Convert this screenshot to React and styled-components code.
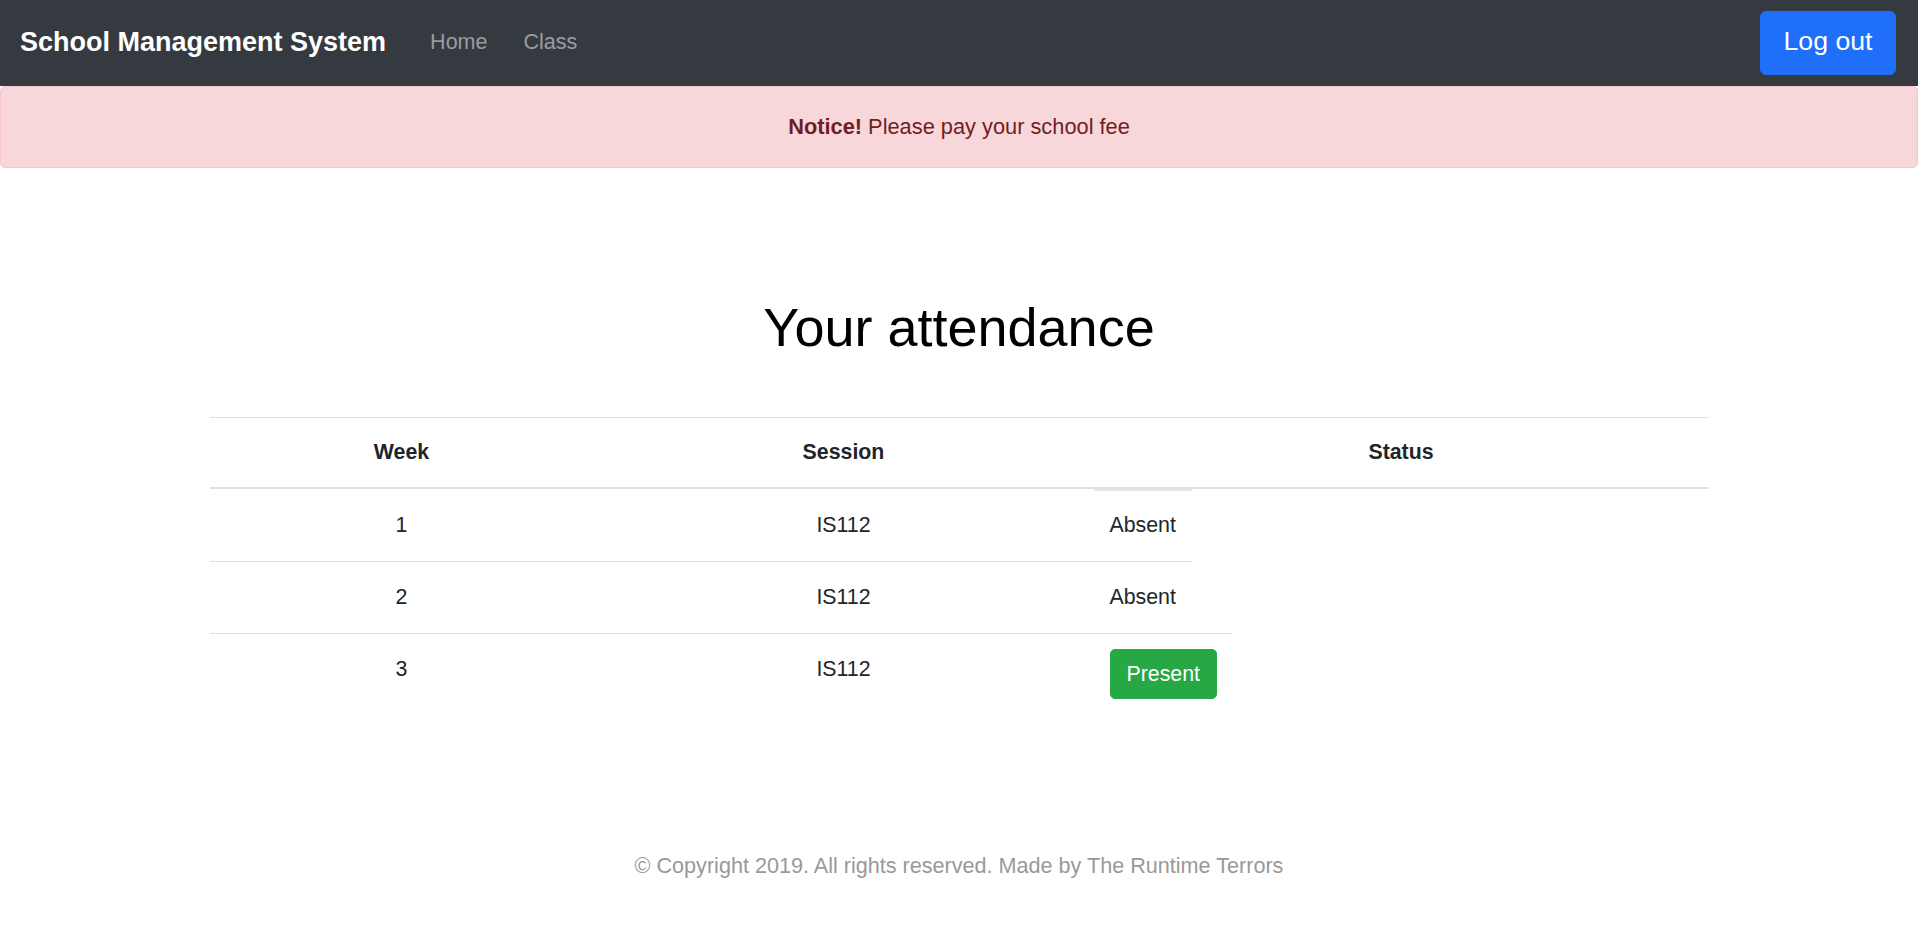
import styled, { createGlobalStyle } from "styled-components";

const GlobalStyle = createGlobalStyle`
  body {
    margin: 0;
    font-family: "Liberation Sans", Arial, sans-serif;
    font-size: 21.33px;
    line-height: 1.5;
    color: #212529;
    background: #fff;
  }
`;

const attendance = [
  { week: 1, session: "IS112", present: false },
  { week: 2, session: "IS112", present: false },
  { week: 3, session: "IS112", present: true },
];

const App = () => {
  return (
    <Page>
      <GlobalStyle />
      <Navbar>
        <Brand>School Management System</Brand>
        <NavList>
          <NavLink>Home</NavLink>
          <NavLink>Class</NavLink>
        </NavList>
        <LogoutButton>Log out</LogoutButton>
      </Navbar>

      <Alert>
        <strong>Notice!</strong>&nbsp;Please pay your school fee
      </Alert>

      <Title>Your attendance</Title>

      <Table>
        <HeadRow>
          <Th>Week</Th>
          <Th>Session</Th>
          <Th>Status</Th>
        </HeadRow>
        {attendance.map((row, i) => (
          <BodyRow key={row.week}>
            <Td $center $noBorder={i === 0}>
              {row.week}
            </Td>
            <Td $center $noBorder={i === 0}>
              {row.session}
            </Td>
            {row.present ? (
              <Td $button>
                <PresentBadge>Present</PresentBadge>
              </Td>
            ) : (
              <Td $first={i === 0}>Absent</Td>
            )}
          </BodyRow>
        ))}
      </Table>

      <Footer>© Copyright 2019. All rights reserved. Made by The Runtime Terrors</Footer>
    </Page>
  );
};

const Page = styled.div`
  min-height: 100vh;
  display: flex;
  flex-direction: column;
`;

const Navbar = styled.nav`
  display: flex;
  align-items: center;
  height: 86px;
  box-sizing: border-box;
  padding: 0 22px 0 20px;
  background: #343a40;
`;

const Brand = styled.a`
  font-size: 27px;
  font-weight: 700;
  color: #fff;
  margin-right: 26px;
  line-height: 1.5;
  margin-top: -2px;
`;

const NavList = styled.div`
  display: flex;
  flex: 1;
  margin-top: -2px;
`;

const NavLink = styled.a`
  padding: 0 18px;
  color: rgba(255, 255, 255, 0.5);
  font-size: 21.5px;
`;

const LogoutButton = styled.button`
  font-family: inherit;
  font-size: 26.7px;
  line-height: 1.5;
  color: #fff;
  background: #1f6ffa;
  border: 1px solid #1f6ffa;
  border-radius: 6px;
  padding: 9px 22px 13px;
  height: 64px;
  width: 136px;
`;

const Alert = styled.div`
  box-sizing: border-box;
  height: 82px;
  display: flex;
  align-items: center;
  justify-content: center;
  font-size: 21.8px;
  background: #f8d7da;
  color: #721c24;
  border: 1px solid #f5c6cb;
  border-radius: 5px;
`;

const Title = styled.h1`
  margin: 127px 0 58px;
  text-align: center;
  font-size: 54px;
  font-weight: 400;
  line-height: 64px;
  color: #000;
`;

const Table = styled.div`
  width: 1499px;
  margin: 0 auto;
`;

const HeadRow = styled.div`
  display: grid;
  grid-template-columns: 384px 500px 1fr;
  border-top: 1px solid #dee2e6;
  border-bottom: 2px solid #dee2e6;
`;

const Th = styled.div`
  text-align: center;
  font-weight: 700;
  padding: 18px 16px 19px;
  line-height: 32px;
`;

const BodyRow = styled.div`
  display: grid;
  grid-template-columns: 384px 500px max-content;
  align-items: stretch;
`;

const Td = styled.div`
  box-sizing: border-box;
  text-align: ${(p) => (p.$center ? "center" : "left")};
  padding: ${(p) => (p.$button ? "15px 16px 15px" : "19px 16px 20px")};
  line-height: 32px;
  border-top: 1px solid ${(p) => (p.$noBorder ? "transparent" : "#dee2e6")};
  ${(p) => p.$first && "border-top: 2px solid #e4e5ea; padding-top: 18px;"}
`;

const PresentBadge = styled.span`
  display: inline-block;
  background: #28a745;
  color: #fff;
  border: 1px solid #28a745;
  border-radius: 5px;
  padding: 8px 16px;
  line-height: 32px;
`;

const Footer = styled.footer`
  margin-top: 136px;
  text-align: center;
  font-size: 21.6px;
  color: #999;
  line-height: 32px;
`;

export default App;
